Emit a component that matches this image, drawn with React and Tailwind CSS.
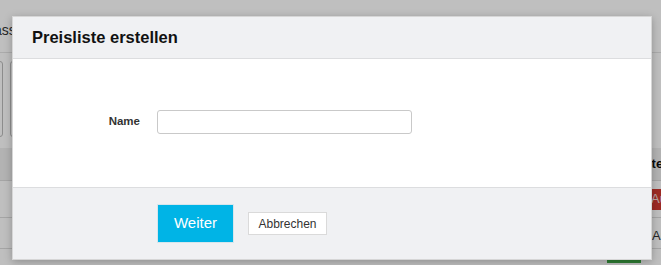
import React from "react";

export default function App() {
  return (
    <div className="relative w-[661px] h-[265px] overflow-hidden bg-white font-['Liberation_Sans',Arial,sans-serif]">
      {/* underlying page */}
      <div className="flex flex-col">
        <div className="h-[53px] border-b border-[#e4e4e4] flex items-start pt-[20px]">
          <span className="ml-[-6px] text-[14px] text-[#333]">asse</span>
        </div>
        <div className="h-[95px] flex items-start pt-[8px] gap-[7px]">
          <div className="ml-[-20px] w-[23px] h-[76px] rounded-[3px] border border-[#bbb]"></div>
          <div className="w-[200px] h-[76px] rounded-[3px] border border-[#bbb]"></div>
        </div>
        <div className="h-[33px] bg-[#efefef] border-b border-[#ddd] flex items-center pl-[635px]">
          <span className="text-[13px] font-bold text-[#111] whitespace-nowrap">Kategorie</span>
        </div>
        <div className="h-[37px] border-b border-[#ddd] flex items-center pl-[638px]">
          <span className="bg-[#d23a31] text-[#f3dcda] text-[13px] pl-[13px] pr-[6px] h-[21px] flex items-center whitespace-nowrap">Aus</span>
        </div>
        <div className="h-[31px] border-b border-[#ddd] flex items-center pt-[6px] pl-[652px]">
          <span className="text-[13px] text-[#333] whitespace-nowrap">Aus</span>
        </div>
        <div className="h-[14px] flex items-end pl-[607px]">
          <div className="w-[34px] h-[3px] bg-[#3ea845]"></div>
        </div>
      </div>

      {/* overlay */}
      <div className="absolute inset-0 bg-black/25"></div>

      {/* modal */}
      <div className="absolute left-[12px] top-[16px] w-[640px] bg-white border border-[#d6d6d6] shadow-[0_2px_8px_rgba(0,0,0,0.25)]">
        <div className="h-[42px] bg-[#f0f1f3] border-b border-[#dcdddf] flex items-center px-[19px]">
          <h2 className="text-[16.5px] font-bold text-[#111] leading-none">Preisliste erstellen</h2>
        </div>
        <div className="h-[128px] flex items-start pt-[51px]">
          <label className="w-[127px] text-right text-[11.5px] font-bold text-[#333] pt-[3px]">Name</label>
          <input className="ml-[17px] w-[255px] h-[24px] rounded-[3px] border border-[#c9c9c9] bg-white outline-none" />
        </div>
        <div className="bg-[#f0f1f3] border-t border-[#dcdddf] flex items-center pt-[16px] pb-[16px] pl-[144px] gap-[14px]">
          <button className="w-[77px] h-[39px] bg-[#00b4e6] border border-[#d6e6ec] text-white text-[15px]">Weiter</button>
          <button className="w-[79px] h-[23px] bg-white border border-[#dadada] text-[#333] text-[12px]">Abbrechen</button>
        </div>
      </div>
    </div>
  );
}
